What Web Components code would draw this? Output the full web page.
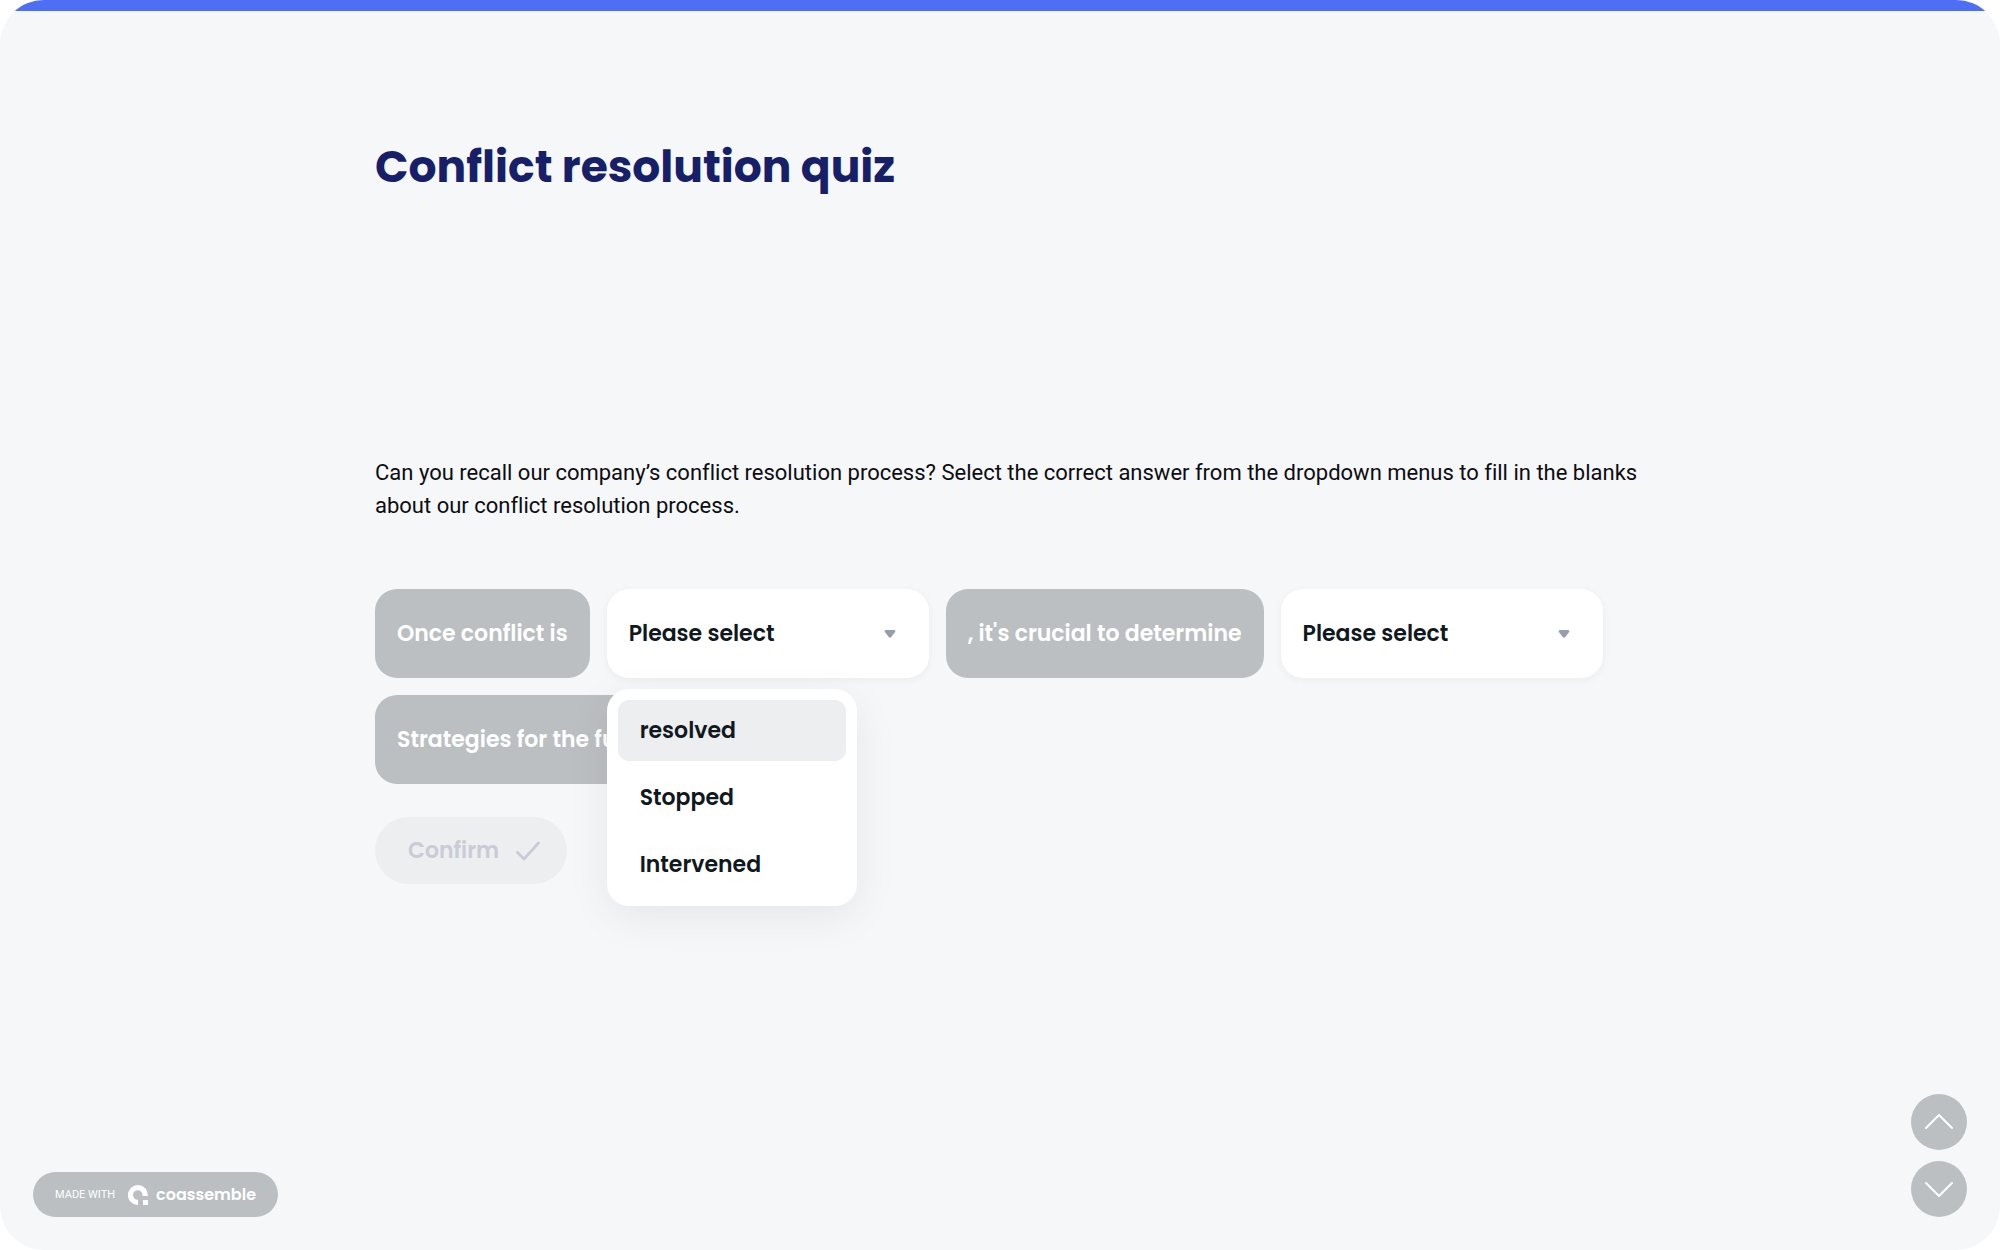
<!DOCTYPE html>
<html lang="en">
<head>
<meta charset="utf-8">
<title>Conflict resolution quiz</title>
<style>
  body { margin: 0; background: #fff; font-family: "Poppins", "Inter", "Liberation Sans", sans-serif; }
</style>
</head>
<body>
<quiz-screen>
  <quiz-heading>Conflict resolution quiz</quiz-heading>
  <quiz-prompt>Can you recall our company’s conflict resolution process? Select the correct answer from the dropdown menus to fill in the blanks about our conflict resolution process.</quiz-prompt>
  <quiz-sentence>
    <text-chip>Once conflict is</text-chip>
    <blank-select label="First blank" choices="resolved|Stopped|Intervened" open></blank-select>
    <text-chip>, it's crucial to determine</text-chip>
    <blank-select label="Second blank"></blank-select>
    <text-chip>Strategies for the future</text-chip>
  </quiz-sentence>
  <confirm-button>Confirm</confirm-button>
  <made-with slot="footer"></made-with>
  <page-nav slot="footer"></page-nav>
</quiz-screen>
<script>
class BaseElement extends HTMLElement {
  constructor() {
    super();
    this.attachShadow({ mode: "open" }).innerHTML = this.template();
  }
}

customElements.define("quiz-screen", class extends BaseElement {
  template() {
    return `<style>
      :host { display: flex; flex-direction: column; min-height: 100vh; box-sizing: border-box;
        background: #f6f7f9; border-radius: 44px; overflow: hidden; }
      .bar { height: 11px; background: #4d6ff4; }
      main { width: 100%; max-width: 1250px; margin: 0 auto; padding-top: 122px; flex: 1; }
      footer { display: flex; justify-content: space-between; align-items: flex-end; padding: 0 33px 33px; }
    </style>
    <div class="bar"></div><main><slot></slot></main><footer><slot name="footer"></slot></footer>`;
  }
});

customElements.define("quiz-heading", class extends BaseElement {
  template() {
    return `<style>
      :host { display: block; margin-bottom: 255px; }
      h1 { margin: 0; color: #171f69; font-size: 44px; line-height: 68px; font-weight: 700; font-variant-ligatures: none; }
    </style><h1><slot></slot></h1>`;
  }
});

customElements.define("quiz-prompt", class extends BaseElement {
  template() {
    return `<style>
      :host { display: block; margin: 0 -17px 67px 0; }
      p { margin: 0; color: #0b0d10; font: 400 22px/33px Roboto, sans-serif; font-variant-ligatures: none; }
    </style><p><slot></slot></p>`;
  }
});

customElements.define("quiz-sentence", class extends BaseElement {
  template() {
    return `<style>
      :host { display: flex; flex-wrap: wrap; gap: 17px; margin-bottom: 33px; }
    </style><slot></slot>`;
  }
});

customElements.define("text-chip", class extends BaseElement {
  template() {
    return `<style>
      :host { display: flex; align-items: center; height: 89px; box-sizing: border-box; padding: 0 22px;
        border-radius: 22px; background: #bbbfc2; color: #fff; font-size: 22px; font-weight: 600; white-space: nowrap;
        font-variant-ligatures: none; }
    </style><slot></slot>`;
  }
});

customElements.define("blank-select", class extends BaseElement {
  template() {
    return `<style>
      :host { display: grid; position: relative; width: 322px; height: 89px; }
      select, svg { grid-area: 1 / 1; }
      select { appearance: none; width: 100%; height: 100%; border: 0; margin: 0; padding: 0 22px; outline: 0;
        border-radius: 22px; background: #fff; color: #101820; font: inherit; font-size: 22px; font-weight: 600;
        box-shadow: 0 2px 8px rgba(20, 30, 50, .05); }
      svg { align-self: center; justify-self: end; margin-right: 33px; pointer-events: none; }
      .menu { position: absolute; z-index: 2; top: 100px; left: 0; width: 250px; height: 217px; box-sizing: border-box;
        display: flex; flex-direction: column; gap: 6px; padding: 11px; border-radius: 22px; background: #fff;
        box-shadow: 0 11px 44px rgba(0, 0, 0, .07); }
      .menu[hidden] { display: none; }
      button { height: 61px; border: 0; padding: 0 22px; border-radius: 11px; background: none; text-align: left;
        color: #101820; font: inherit; font-size: 22px; font-weight: 600; }
      button:first-child { background: #edeef0; }
    </style>
    <select><option>Please select</option></select>
    <svg width="12" height="8" viewBox="0 0 12 8" fill="#969dab"><path d="M2 0h8c1.1 0 1.9 1.2 1.1 2.1L7.3 7c-.7.8-1.9.8-2.6 0L.9 2.1C.1 1.2.9 0 2 0z"/></svg>
    <div class="menu" role="listbox" hidden></div>`;
  }
  connectedCallback() {
    const select = this.shadowRoot.querySelector("select");
    const menu = this.shadowRoot.querySelector(".menu");
    select.setAttribute("aria-label", this.getAttribute("label"));
    menu.hidden = !this.hasAttribute("open");
    for (const choice of (this.getAttribute("choices") || "").split("|").filter(Boolean)) {
      const button = document.createElement("button");
      button.type = "button";
      button.setAttribute("role", "option");
      button.textContent = choice;
      button.addEventListener("click", () => {
        select.options[0].textContent = choice;
        menu.hidden = true;
      });
      menu.append(button);
    }
  }
});

customElements.define("confirm-button", class extends BaseElement {
  template() {
    return `<style>
      :host { display: block; }
      button { display: flex; align-items: center; gap: 17px; height: 67px; border: 0; padding: 0 27px 0 33px;
        border-radius: 34px; background: #edeef0; color: #c9ccd6; font: inherit; font-size: 22px; font-weight: 600; }
    </style>
    <button type="button" disabled><slot></slot><svg width="24" height="22" viewBox="0 0 24 22" fill="none" stroke="currentColor" stroke-width="2.8" stroke-linecap="round" stroke-linejoin="round"><path d="M1.5 12.5l6.5 6.5L22.5 3"/></svg></button>`;
  }
});

customElements.define("made-with", class extends BaseElement {
  template() {
    return `<style>
      :host { display: block; }
      a { display: flex; align-items: center; height: 45px; padding: 0 22px; border-radius: 23px;
        background: #bbbfc2; color: #fff; text-decoration: none; }
      small { font: 400 11px/16px Roboto, sans-serif; margin-right: 13px; }
      svg { margin-right: 8px; }
      b { font-size: 16px; line-height: 22px; font-weight: 600; }
    </style>
    <a href="#"><small>MADE WITH</small><svg width="20" height="20" viewBox="0 0 20 20" fill="#fff"><path d="M10 20A10 10 0 1 1 19.8 11H14.4A4.8 4.8 0 1 0 10 14.8z"/><path d="M15 15h5v5h-5z"/></svg><b>coassemble</b></a>`;
  }
});

customElements.define("page-nav", class extends BaseElement {
  template() {
    return `<style>
      nav { display: flex; flex-direction: column; gap: 11px; }
      button { display: grid; place-items: center; width: 56px; height: 56px; border: 0; padding: 0;
        border-radius: 50%; background: #bbbfc2; }
      svg { fill: none; stroke: #fff; stroke-width: 2; stroke-linecap: round; stroke-linejoin: round; }
    </style>
    <nav aria-label="Pages">
      <button type="button" aria-label="Previous"><svg width="28" height="16" viewBox="0 0 28 16"><path d="M1 14L14 1l13 13"/></svg></button>
      <button type="button" aria-label="Next"><svg width="28" height="16" viewBox="0 0 28 16"><path d="M1 2l13 13L27 2"/></svg></button>
    </nav>`;
  }
});
</script>
</body>
</html>
